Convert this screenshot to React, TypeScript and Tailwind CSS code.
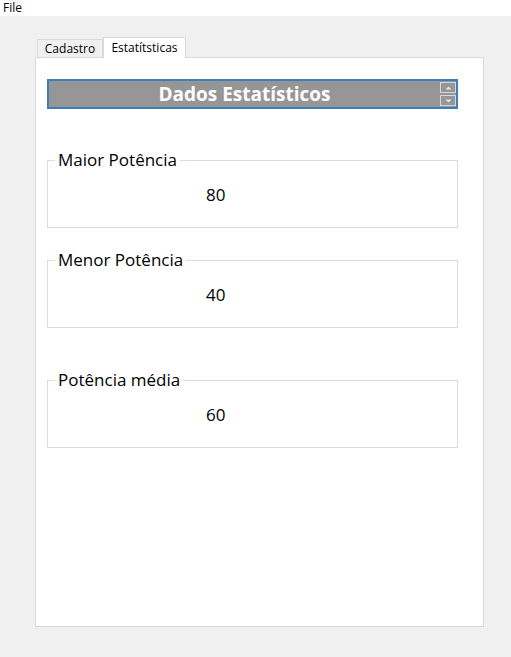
import React from 'react';

const font = { fontFamily: '"Segoe UI", "Open Sans", "Noto Sans", sans-serif' };

const groups = [
  { title: 'Maior Potência', value: '80', gap: 'mt-[41px]' },
  { title: 'Menor Potência', value: '40', gap: 'mt-[22px]' },
  { title: 'Potência média', value: '60', gap: 'mt-[42px]' },
];

const Spinner = () => (
  <div className="flex h-full w-[16px] flex-col justify-center gap-[2px] py-[1px]">
    <div className="flex h-[11px] items-center justify-center border border-[#d8d8d8] border-b-dotted">
      <svg width="7" height="4" viewBox="0 0 7 4">
        <path d="M0.5 3.5 L3.5 0.5 L6.5 3.5 Z" fill="#e6e6e6" />
      </svg>
    </div>
    <div className="flex h-[11px] items-center justify-center border border-[#d8d8d8] border-t-dotted">
      <svg width="7" height="4" viewBox="0 0 7 4">
        <path d="M0.5 0.5 L3.5 3.5 L6.5 0.5 Z" fill="#e6e6e6" />
      </svg>
    </div>
  </div>
);

const GroupBox = ({ title, value, gap }: { title: string; value: string; gap: string }) => (
  <fieldset className={`${gap} h-[78px] w-[411px] min-w-0 border border-[#dcdcdc] p-0`}>
    <legend className="ml-[7px] px-[3px] text-[17px] leading-[20px] text-black">{title}</legend>
    <div className="mt-[15px] pl-[158px] text-[17px] leading-[20px] text-black">{value}</div>
  </fieldset>
);

export default function App() {
  return (
    <div className="flex h-[657px] w-[511px] flex-col bg-[#f0f0f0]" style={font}>
      <div className="h-[16px] bg-white pl-[3px] text-[12px] leading-[16px] text-black">File</div>

      <div className="ml-[35px] mt-[21px] flex w-[449px] flex-col">
        <div className="flex h-[20px] items-end pl-[2px]">
          <div className="flex h-[18px] w-[66px] items-center justify-center border border-b-0 border-[#d9d9d9] bg-[#f0f0f0] text-[12px] text-black">
            Cadastro
          </div>
          <div className="relative z-10 -mb-px flex h-[21px] w-[83px] items-center justify-center border border-b-0 border-[#d9d9d9] bg-white text-[12px] text-black">
            Estatítsticas
          </div>
        </div>

        <div className="flex h-[570px] flex-col border border-[#d9d9d9] bg-white px-[11px] pt-[21px]">
          <div className="flex h-[30px] w-[411px] items-center border-2 border-[#3f7fb8] bg-[#969696]">
            <div className="flex-1 text-center text-[19px] font-bold leading-[24px] text-white">Dados Estatísticos</div>
            <Spinner />
          </div>

          {groups.map((g) => (
            <GroupBox key={g.title} {...g} />
          ))}
        </div>
      </div>
    </div>
  );
}
